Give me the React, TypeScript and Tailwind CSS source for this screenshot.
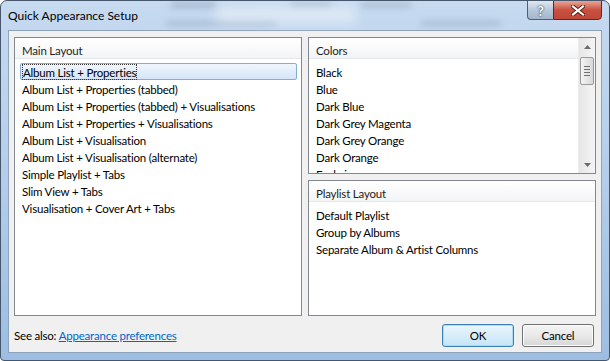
import React from "react";

const mainItems = [
  "Album List + Properties",
  "Album List + Properties (tabbed)",
  "Album List + Properties (tabbed) + Visualisations",
  "Album List + Properties + Visualisations",
  "Album List + Visualisation",
  "Album List + Visualisation (alternate)",
  "Simple Playlist + Tabs",
  "Slim View + Tabs",
  "Visualisation + Cover Art + Tabs",
];

const colorItems = [
  "Black",
  "Blue",
  "Dark Blue",
  "Dark Grey Magenta",
  "Dark Grey Orange",
  "Dark Orange",
  "Fuchsia",
];

const playlistItems = ["Default Playlist", "Group by Albums", "Separate Album & Artist Columns"];

function Header({ title }: { title: string }) {
  return (
    <div className="h-[21px] pl-[7px] pt-[5px] leading-[16px] text-[#1e1e1e] border-b border-[#e3e6ea] bg-gradient-to-b from-white to-[#f3f4f6]">
      {title}
    </div>
  );
}

function Row({ label, selected }: { label: string; selected?: boolean }) {
  if (selected) {
    return (
      <div className="h-[17px] mx-[5px] mr-[4px] flex items-center rounded-[2px] border border-[#84acdd] bg-gradient-to-b from-[#f1f6fd] to-[#d5e5f8]">
        <span className="ml-[1px] px-[1px] pt-[1px] leading-[15px] outline outline-1 outline-dotted outline-[#333] -outline-offset-1">
          {label}
        </span>
      </div>
    );
  }
  return <div className="h-[17px] pl-[7px] pt-[1px] leading-[17px] whitespace-nowrap">{label}</div>;
}

function ScrollBar() {
  return (
    <div className="w-[17px] shrink-0 flex flex-col bg-gradient-to-r from-[#e6e6e6] to-[#f5f5f5] border-l border-[#ececec]">
      <div className="h-[17px] flex items-center justify-center">
        <svg width="7" height="4" viewBox="0 0 7 4">
          <path d="M0 4 L3.5 0 L7 4 Z" fill="#6b6b6b" />
        </svg>
      </div>
      <div className="mx-[1px] mt-[2px] h-[28px] rounded-[2px] border border-[#9a9a9a] bg-gradient-to-r from-[#f3f3f3] to-[#d8d8d8] flex flex-col items-center justify-center gap-[2px]">
        <div className="w-[6px] h-[1px] bg-[#6f6f6f]" />
        <div className="w-[6px] h-[1px] bg-[#6f6f6f]" />
        <div className="w-[6px] h-[1px] bg-[#6f6f6f]" />
        <div className="w-[6px] h-[1px] bg-[#6f6f6f]" />
      </div>
      <div className="flex-1" />
      <div className="h-[17px] flex items-center justify-center">
        <svg width="7" height="4" viewBox="0 0 7 4">
          <path d="M0 0 L3.5 4 L7 0 Z" fill="#6b6b6b" />
        </svg>
      </div>
    </div>
  );
}

function Button({ label, primary }: { label: string; primary?: boolean }) {
  return (
    <div
      className={`w-[72px] h-[23px] rounded-[3px] border flex items-center justify-center ${
        primary
          ? "border-[#3c7fb1] bg-gradient-to-b from-[#eaf6fd] to-[#c5e5f7] shadow-[inset_0_0_0_1px_#a9ddf6]"
          : "border-[#707070] bg-gradient-to-b from-[#f4f4f4] via-[#e9e9e9] to-[#d6d6d6] shadow-[inset_0_0_0_1px_#fcfcfc]"
      }`}
    >
      {label}
    </div>
  );
}

export default function App() {
  return (
    <div className="w-[610px] h-[361px] overflow-hidden bg-white font-['Segoe_UI','Lato',sans-serif] text-[11.5px] tracking-[-0.2px] text-black">
      <div className="relative w-[610px] h-[361px] rounded-t-[7px] rounded-b-[4px] border border-[#46566b] bg-gradient-to-b from-[#c6daf0] via-[#b3cdea] to-[#9dbde3] flex flex-col overflow-hidden">
        {/* blurred glass behind the title bar */}
        <div className="absolute left-[170px] top-[1px] w-[45px] h-[6px] bg-[#8a9cb2] blur-[3px] opacity-50" />
        <div className="absolute left-[290px] top-[1px] w-[40px] h-[5px] bg-[#8a9cb2] blur-[3px] opacity-50" />
        <div className="absolute left-[360px] top-[1px] w-[50px] h-[6px] bg-[#8a9cb2] blur-[3px] opacity-40" />
        <div className="absolute left-[165px] top-[20px] w-[110px] h-[5px] bg-[#8193ab] blur-[3px] opacity-40" />
        <div className="absolute left-[420px] top-[20px] w-[80px] h-[5px] bg-[#8193ab] blur-[3px] opacity-40" />
        <div className="absolute left-[215px] top-[5px] w-[140px] h-[18px] bg-white blur-[6px] opacity-40" />

        <div className="relative h-[29px] flex items-start">
          <div className="pl-[7px] pt-[7px] leading-[16px] text-[12px] tracking-normal text-black">Quick Appearance Setup</div>
          <div className="ml-auto mr-[7px] -mt-[1px] flex">
            <div className="w-[26px] h-[20px] rounded-bl-[4px] border border-[#4d5e75] border-r-0 bg-gradient-to-b from-[#dfe8f2] via-[#b7c8da] to-[#a3b6cb] flex items-center justify-center font-bold text-[14px] text-white [text-shadow:0_0_2px_#30445c,0_0_1px_#30445c]">
              ?
            </div>
            <div className="w-[49px] h-[20px] rounded-br-[4px] border border-[#5b2a22] bg-gradient-to-b from-[#e6a597] via-[#c94f3f] to-[#c0483a] flex items-center justify-center">
              <svg width="14" height="11" viewBox="0 0 14 11">
                <path d="M2 1.5 L12 9.5 M12 1.5 L2 9.5" stroke="#5a1a12" strokeWidth="4" strokeLinecap="square" />
                <path d="M2 1.5 L12 9.5 M12 1.5 L2 9.5" stroke="#ffffff" strokeWidth="2.2" strokeLinecap="square" />
              </svg>
            </div>
          </div>
        </div>

        <div className="mx-[7px] h-[323px] border border-[#8ea4bd] bg-[#f0f0f0] flex flex-col">
          <div className="flex gap-[6px] px-[5px] pt-[6px] h-[285px]">
            <div className="w-[288px] h-[279px] border border-[#828790] bg-white">
              <Header title="Main Layout" />
              <div className="pt-[4px]">
                {mainItems.map((item, i) => (
                  <Row key={item} label={item} selected={i === 0} />
                ))}
              </div>
            </div>
            <div className="w-[288px] flex flex-col gap-[6px]">
              <div className="h-[137px] border border-[#828790] bg-white flex overflow-hidden">
                <div className="flex-1 overflow-hidden">
                  <Header title="Colors" />
                  <div className="pt-[4px]">
                    {colorItems.map((item) => (
                      <Row key={item} label={item} />
                    ))}
                  </div>
                </div>
                <ScrollBar />
              </div>
              <div className="h-[136px] border border-[#828790] bg-white">
                <Header title="Playlist Layout" />
                <div className="pt-[4px]">
                  {playlistItems.map((item) => (
                    <Row key={item} label={item} />
                  ))}
                </div>
              </div>
            </div>
          </div>
          <div className="flex items-center px-[5px] pt-[3px] h-[36px]">
            <span>
              See also: <span className="text-[#0066cc] underline">Appearance preferences</span>
            </span>
            <div className="ml-auto flex gap-[8px] mr-[2px]">
              <Button label="OK" primary />
              <Button label="Cancel" />
            </div>
          </div>
        </div>
      </div>
    </div>
  );
}
